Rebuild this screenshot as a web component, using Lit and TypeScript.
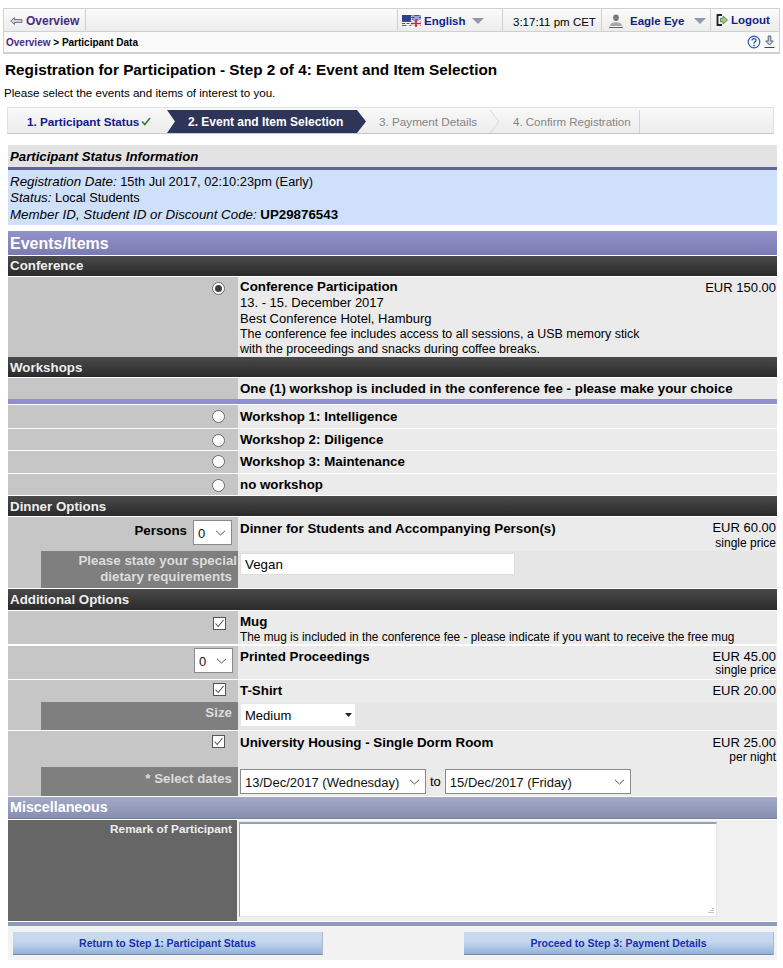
import { LitElement, css, html, svg } from "lit";
import { customElement } from "lit/decorators.js";

const chevron = html`<svg class="chev" width="11" height="6" viewBox="0 0 11 6"><path d="M1 .8 5.500 5 10 .8" fill="none" stroke="#555" stroke-width="1"/></svg>`;
const tri = html`<svg class="tri" width="12" height="6" viewBox="0 0 12 6"><path d="M0 0h12L6 6z" fill="#8d99ad"/></svg>`;

const flag = svg`<svg width="19" height="12" viewBox="0 0 19 12">
  <rect width="19" height="12" fill="#d8232f"/>
  <path d="M0 1.500h19M0 3.500h19M0 5.500h19M0 7.500h19M0 9.500h19M0 11.500h19" stroke="#f4f4f4" stroke-width="1"/>
  <rect width="9" height="6" fill="#2b3f95"/>
  <path d="M10 0 19 6M19 0 10 6" stroke="#fff" stroke-width="1.500"/>
  <rect x="10" y="0" width="9" height="6" fill="#2b3f95" opacity=".45"/>
  <path d="M9 12 19 5M9 5l10 7" stroke="#fff" stroke-width="1.800"/>
  <path d="M3 12 9 8M3 8l6 4" stroke="#fff" stroke-width="1"/>
  <path d="M14 5v7M9 8.500h10" stroke="#d8232f" stroke-width="1.500"/>
</svg>`;

@customElement("app-root")
export class AppRoot extends LitElement {
  static styles = css`
    :host {
      display: block;
      width: 783px;
      height: 968px;
      background: #fff;
      font-family: "Liberation Sans", Arial, sans-serif;
      font-size: 13px;
      color: #000;
      overflow: hidden;
    }
    .page {
      padding: 8px 3px 0 3px;
    }
    .head {
      border: 1px solid #d0d0d0;
      border-bottom-width: 2px;
      background: #fafafa;
    }
    .nav {
      display: flex;
      height: 22px;
      background: linear-gradient(#fbfbfb, #ececec);
      border-bottom: 1px solid #d0d0d0;
      font-weight: bold;
      font-size: 11.500px;
    }
    .nav > div {
      display: flex;
      align-items: center;
      border-right: 1px solid #d0d0d0;
      box-sizing: border-box;
      padding-top: 2px;
    }
    .nav .back {
      width: 82px;
      padding-left: 6px;
      gap: 3px;
      color: #4b2a85;
      font-size: 12px;
    }
    .nav .fill {
      flex: 1;
    }
    .nav .lang {
      width: 105px;
      padding-left: 4px;
      gap: 3px;
      color: #0f1f8f;
    }
    .nav .clock {
      width: 99px;
      padding-left: 10px;
      padding-top: 4px;
      font-weight: normal;
    }
    .nav .user {
      width: 109px;
      padding-left: 7px;
      gap: 7px;
      color: #0f1f8f;
    }
    .nav .logout {
      flex: none;
      width: 68px;
      padding-left: 5px;
      padding-bottom: 2px;
      gap: 3px;
      color: #0f1f8f;
      border-right: none;
    }
    .tri {
      margin-left: 3px;
    }
    .crumb {
      display: flex;
      align-items: center;
      justify-content: space-between;
      height: 20px;
      padding: 0 4px 0 2px;
      font-size: 10px;
      font-weight: bold;
    }
    .crumb .link {
      color: #4b2a85;
    }
    .crumb .tools {
      display: flex;
      gap: 3px;
    }
    h1 {
      margin: 7px 0 0 2px;
      font-size: 15.300px;
      line-height: 17px;
    }
    .intro {
      margin: 8px 0 0 1px;
      line-height: 14px;
      font-size: 11.600px;
    }
    .steps {
      display: flex;
      margin: 7px 6px 0 4px;
      height: 27px;
      box-sizing: border-box;
      padding: 2px 0;
      background: linear-gradient(#f9f9f9, #ececec);
      border: 1px solid #e2e2e2;
      border-bottom-color: #c8c8c8;
      font-size: 11.700px;
    }
    .step {
      display: flex;
      align-items: center;
      gap: 2px;
      height: 23px;
      flex: none;
      position: relative;
      box-sizing: border-box;
    }
    .step.done {
      width: 160px;
      padding-left: 19px;
      color: #13188b;
      font-weight: bold;
    }
    .step.on {
      width: 199px;
      padding-left: 21px;
      color: #fff;
      font-weight: bold;
      font-size: 12px;
      background: #2e3559;
      clip-path: polygon(0 0, 190px 0, 199px 50%, 190px 100%, 0 100%, 8px 50%);
      margin-left: -1px;
    }
    .step.pay {
      width: 134px;
      padding-left: 13px;
      color: #858585;
    }
    .step.conf {
      width: 140px;
      padding-left: 13px;
      color: #858585;
      border-right: 1px solid #d4d4d4;
      font-size: 11.500px;
    }
    .step.pay svg {
      position: absolute;
      right: 0;
      top: 0;
    }
    .panel {
      margin: 11px 3px 0 5px;
    }
    .status-head {
      height: 22px;
      line-height: 23px;
      padding-left: 2px;
      background: #e3e3e3;
      border-bottom: 3px solid #64649c;
      font-size: 13.200px;
      font-weight: bold;
      font-style: italic;
    }
    .status {
      height: 55px;
      box-sizing: border-box;
      padding: 4px 2px 0;
      background: #cfe0fb;
      line-height: 16.300px;
      font-size: 12.800px;
    }
    .status i,
    .status b {
      font-size: 13.330px;
    }
    .events {
      margin-top: 6px;
      height: 24px;
      line-height: 25px;
      padding-left: 2px;
      background: linear-gradient(#9393cb, #7a7ab4);
      color: #fff;
      font-size: 16px;
      font-weight: bold;
    }
    .misc {
      height: 22px;
      margin-bottom: 1px;
      line-height: 21px;
      padding-left: 2px;
      background: linear-gradient(#a3a9c6, #878fb0);
      border-bottom: 1px solid #76809c;
      box-sizing: border-box;
      color: #fff;
      font-size: 14.300px;
      font-weight: bold;
    }
    .sec {
      box-sizing: border-box;
      height: 21px;
      line-height: 21px;
      padding-left: 2px;
      background: linear-gradient(#4a4a4a, #2a2a2a);
      color: #eee;
      font-size: 13.330px;
      font-weight: bold;
      border-bottom: 1px solid #fff;
    }
    .sec.first {
      margin-top: 1px;
      line-height: 20px;
    }
    .sec.tall {
      height: 22px;
    }
    .row {
      display: grid;
      grid-template-columns: 230px 1fr;
      border-bottom: 1px solid #fff;
      box-sizing: border-box;
    }
    .row.bare {
      border-bottom: none;
    }
    .row .l {
      background: #c6c6c6;
      display: flex;
      justify-content: flex-end;
      padding-right: 8px;
      box-sizing: border-box;
    }
    .row .c {
      background: #ebebeb;
      display: flex;
      justify-content: space-between;
      padding: 0 1px 0 2px;
      font-weight: bold;
      font-size: 13.330px;
      overflow: hidden;
    }
    .row .c b {
      display: block;
      line-height: 16px;
      padding-top: 3px;
    }
    .row .c b.hi {
      padding-top: 2px;
    }
    .row .c b.low {
      padding-top: 4px;
    }
    .desc {
      font-weight: normal;
      line-height: 16px;
      font-size: 13px;
    }
    .small {
      font-weight: normal;
      font-size: 12.450px;
      line-height: 15px;
      white-space: nowrap;
    }
    .small.mug {
      font-size: 11.870px;
    }
    .price {
      font-weight: normal;
      text-align: right;
      font-size: 13px;
      line-height: 16px;
      padding: 3px 0 0;
      white-space: nowrap;
    }
    .price span {
      display: block;
      font-size: 12px;
      line-height: 14px;
    }
    .price.print span {
      margin-top: -2px;
    }
    .price.house {
      padding-top: 4px;
    }
    .price.house span {
      margin-top: -1px;
    }
    .radio {
      width: 11px;
      height: 11px;
      margin: 5px 5px 0 0;
      border: 1px solid #6b6b6b;
      border-radius: 50%;
      background: #fff;
      position: relative;
      flex: none;
    }
    .radio.up {
      margin-top: 4px;
    }
    .radio.on::after {
      content: "";
      position: absolute;
      inset: 2px;
      border-radius: 50%;
      background: #3c3c3c;
    }
    .check {
      width: 11px;
      height: 11px;
      margin: 6px 4px 0 0;
      border: 1px solid #555;
      background: #fff;
      flex: none;
      display: flex;
    }
    .check.t3 {
      margin-top: 3px;
    }
    .check.t4 {
      margin: 4px 5px 0 0;
    }
    .sel {
      position: relative;
      box-sizing: border-box;
      height: 25px;
      background: #fff;
      border: 1px solid #8a8a8a;
      display: flex;
      align-items: center;
      padding: 1px 0 0 4px;
      font-size: 13px;
      font-weight: normal;
      color: #111;
    }
    .sel .chev {
      position: absolute;
      right: 5px;
      top: 9px;
    }
    .qty {
      padding: 3px 0 0;
      margin-right: -2px;
    }
    .qty.tight {
      padding: 2px 0 0;
      margin-right: -3px;
    }
    .persons {
      padding-top: 6px;
      padding-right: 6px;
      font-weight: bold;
      font-size: 13.330px;
    }
    .split .l {
      padding: 0;
      display: grid;
      grid-template-rows: auto 1fr;
      grid-template-columns: 33px 1fr;
    }
    .split .l .top {
      grid-column: 1 / 3;
      display: flex;
      justify-content: flex-end;
      align-items: flex-start;
      padding-right: 8px;
    }
    .split .l .tag {
      grid-column: 2;
      background: #7f7f7f;
      color: #dcdcdc;
      font-weight: bold;
      font-size: 13.330px;
      text-align: right;
      padding: 3px 6px 0 0;
      line-height: 16px;
      white-space: nowrap;
    }
    .split .l .tag.lines {
      padding-top: 2px;
    }
    .split .l .tag.dates {
      padding-top: 4px;
    }
    .tag .over {
      margin-right: -5px;
    }
    .split .c {
      display: block;
      padding: 0;
    }
    .split .c .top {
      display: flex;
      justify-content: space-between;
      padding: 0 1px 0 2px;
    }
    .split .c .bot {
      background: #e6e6e6;
      padding: 2px 2px 0;
      display: flex;
      align-items: flex-start;
      gap: 4px;
      font-weight: normal;
      font-size: 13px;
    }
    .split .c .bot.plain {
      background: #ebebeb;
    }
    .bot .to {
      padding-top: 5px;
    }
    .text {
      box-sizing: border-box;
      width: 275px;
      height: 22px;
      background: #fff;
      border: 1px solid #dcdcdc;
      padding: 3px 4px;
      font-weight: normal;
      font-size: 13.330px;
      line-height: 15px;
    }
    .drop {
      box-sizing: border-box;
      width: 114px;
      height: 22px;
      margin-left: 1px;
      background: #fff;
      display: flex;
      justify-content: space-between;
      align-items: center;
      padding: 0 3px 0 4px;
      font-size: 13px;
    }
    .strip {
      height: 5px;
      background: #8f8fcc;
      border-bottom: 1px solid #fff;
    }
    .remark {
      display: grid;
      grid-template-columns: 229px 1fr;
      height: 102px;
      box-sizing: border-box;
      border-bottom: 1px solid #fff;
    }
    .remark .tag {
      background: #666;
      color: #eee;
      text-align: right;
      font-weight: bold;
      font-size: 11.800px;
      line-height: 14px;
      padding: 2px 5px 0 0;
    }
    .remark .box {
      background: #f0f0f0;
      padding: 2px 0 0 2px;
    }
    .area {
      box-sizing: border-box;
      width: 478px;
      height: 95px;
      background: #fff;
      border: 1px solid #e2e6ea;
      border-top: 2px solid #8ca5b5;
      border-left: 1px solid #8ca5b5;
      position: relative;
    }
    .area svg {
      position: absolute;
      right: 1px;
      bottom: 1px;
    }
    .blue-strip {
      height: 4px;
      background: #8f99ba;
    }
    .foot {
      display: flex;
      justify-content: space-between;
      height: 34px;
      padding: 6px 3px 0 5px;
      box-sizing: border-box;
      background: #f2f2f2;
    }
    .btn {
      box-sizing: border-box;
      width: 310px;
      height: 23px;
      display: flex;
      align-items: center;
      justify-content: center;
      background: linear-gradient(#c9daf0, #c5d7ee 45%, #92b1d8);
      border-bottom: 1px solid #7c8ba0;
      border-right: 1px solid #b0b8c4;
      color: #1330b3;
      font-size: 10.500px;
      font-weight: bold;
    }
  `;

  private selectBox(text: string, width: number) {
    return html`<div class="sel" style="width:${width}px">${text}${chevron}</div>`;
  }

  private radioRow(label: string, height: number, up = false, low = false) {
    return html`<div class="row" style="height:${height}px">
      <div class="l"><div class="radio ${up ? "up" : ""}"></div></div>
      <div class="c"><b class=${low ? "low" : ""}>${label}</b></div>
    </div>`;
  }

  private tick() {
    return html`<svg width="11" height="11" viewBox="0 0 11 11"><path d="M1.500 5.500 4.200 8.500 9.500 2" fill="none" stroke="#555" stroke-width="1.100"/></svg>`;
  }

  render() {
    return html`<div class="page">
      <div class="head">
        <div class="nav">
          <div class="back">
            <svg width="13" height="9" viewBox="0 0 13 9"><path d="M4.500 .5.800 4 4.500 7.500V5.400H12V2.600H4.500z" fill="#d6dae2" stroke="#6a7080"/></svg>
            Overview
          </div>
          <div class="fill"></div>
          <div class="lang">${flag} English ${tri}</div>
          <div class="clock">3:17:11 pm CET</div>
          <div class="user">
            <svg width="14" height="14" viewBox="0 0 14 14"><ellipse cx="7" cy="3.800" rx="2.800" ry="3.300" fill="#777"/><path d="M1 12c.3-3 3-3.800 6-3.800s5.700.8 6 3.800z" fill="#a8a8a8"/><path d="M0 13.500h14" stroke="#666"/></svg>
            Eagle Eye ${tri}
          </div>
          <div class="logout">
            <svg width="12" height="12" viewBox="0 0 12 12"><path d="M6 1H1.500v10H6" fill="none" stroke="#222" stroke-width="1.800"/><path d="M4.500 4.200h2.600V2L11.500 6 7.100 10V7.800H4.500z" fill="#9ccf7c" stroke="#3f6d2d" stroke-width=".7"/></svg>
            Logout
          </div>
        </div>
        <div class="crumb">
          <span><span class="link">Overview</span> &gt; Participant Data</span>
          <span class="tools">
            <svg width="14" height="14" viewBox="0 0 14 14"><circle cx="7" cy="7" r="5.800" fill="none" stroke="#2d5a9e" stroke-width="1.200"/><path d="M5 5.400C5 3 9 3 9 5.400 9 7 7 6.800 7 8.400" fill="none" stroke="#2d5a9e" stroke-width="1.300"/><circle cx="7" cy="10.300" r=".9" fill="#2d5a9e"/></svg>
            <svg width="11" height="14" viewBox="0 0 11 14"><path d="M4.200 1h2.600v5h2.500L5.500 10 1.700 6h2.500z" fill="#c9d2dc" stroke="#4a5560" stroke-width=".9"/><path d="M.5 12.500h10" stroke="#444"/></svg>
          </span>
        </div>
      </div>

      <h1>Registration for Participation - Step 2 of 4: Event and Item Selection</h1>
      <p class="intro">Please select the events and items of interest to you.</p>

      <div class="steps">
        <div class="step done">
          1. Participant Status
          <svg width="10" height="9" viewBox="0 0 10 9"><path d="M1 4.500 3.800 7.500 9 1" fill="none" stroke="#2a7a2a" stroke-width="1.500"/></svg>
        </div>
        <div class="step on">2. Event and Item Selection</div>
        <div class="step pay">
          3. Payment Details
          <svg width="11" height="23" viewBox="0 0 11 23"><path d="M1 0 10 11.500 1 23" fill="none" stroke="#d8d8d8"/></svg>
        </div>
        <div class="step conf">4. Confirm Registration</div>
      </div>

      <div class="panel">
        <div class="status-head">Participant Status Information</div>
        <div class="status">
          <i>Registration Date:</i> 15th Jul 2017, 02:10:23pm (Early)<br />
          <i>Status:</i> Local Students<br />
          <i>Member ID, Student ID or Discount Code:</i> <b>UP29876543</b>
        </div>

        <div class="events">Events/Items</div>

        <div class="sec first">Conference</div>
        <div class="row bare" style="height:80px">
          <div class="l"><div class="radio on"></div></div>
          <div class="c">
            <div>
              <b class="hi">Conference Participation</b>
              <div class="desc">13. - 15. December 2017</div>
              <div class="desc">Best Conference Hotel, Hamburg</div>
              <div class="small">The conference fee includes access to all sessions, a USB memory stick</div>
              <div class="small">with the proceedings and snacks during coffee breaks.</div>
            </div>
            <div class="price">EUR 150.00</div>
          </div>
        </div>

        <div class="sec">Workshops</div>
        <div class="row bare" style="height:21px">
          <div class="l"></div>
          <div class="c"><b>One (1) workshop is included in the conference fee - please make your choice</b></div>
        </div>
        <div class="strip"></div>
        ${this.radioRow("Workshop 1: Intelligence", 24, false, true)}
        ${this.radioRow("Workshop 2: Diligence", 22)}
        ${this.radioRow("Workshop 3: Maintenance", 23, true)}
        ${this.radioRow("no workshop", 22)}

        <div class="sec">Dinner Options</div>
        <div class="row split" style="height:72px">
          <div class="l">
            <div class="top" style="height:34px">
              <span class="persons">Persons</span>
              <div class="qty">${this.selectBox("0", 39)}</div>
            </div>
            <div class="tag lines"><div class="over">Please state your special</div>dietary requirements</div>
          </div>
          <div class="c">
            <div class="top" style="height:34px">
              <b class="low">Dinner for Students and Accompanying Person(s)</b>
              <div class="price">EUR 60.00<span>single price</span></div>
            </div>
            <div class="bot" style="height:37px"><div class="text">Vegan</div></div>
          </div>
        </div>

        <div class="sec tall">Additional Options</div>
        <div class="row" style="height:35px;border-bottom-width:2px">
          <div class="l"><div class="check">${this.tick()}</div></div>
          <div class="c">
            <div>
              <b>Mug</b>
              <div class="small mug">The mug is included in the conference fee - please indicate if you want to receive the free mug</div>
            </div>
          </div>
        </div>
        <div class="row" style="height:34px">
          <div class="l"><div class="qty tight">${this.selectBox("0", 39)}</div></div>
          <div class="c">
            <b>Printed Proceedings</b>
            <div class="price print">EUR 45.00<span>single price</span></div>
          </div>
        </div>
        <div class="row split" style="height:51px">
          <div class="l">
            <div class="top" style="height:22px"><div class="check t3">${this.tick()}</div></div>
            <div class="tag">Size</div>
          </div>
          <div class="c">
            <div class="top" style="height:22px"><b>T-Shirt</b><div class="price">EUR 20.00</div></div>
            <div class="bot" style="height:28px">
              <div class="drop">
                Medium
                <svg width="7" height="4" viewBox="0 0 7 4"><path d="M0 0h7L3.500 4z" fill="#222"/></svg>
              </div>
            </div>
          </div>
        </div>
        <div class="row split" style="height:66px">
          <div class="l">
            <div class="top" style="height:36px"><div class="check t4">${this.tick()}</div></div>
            <div class="tag dates">* Select dates</div>
          </div>
          <div class="c">
            <div class="top" style="height:36px">
              <b class="low">University Housing - Single Dorm Room</b>
              <div class="price house">EUR 25.00<span>per night</span></div>
            </div>
            <div class="bot plain" style="height:29px">
              ${this.selectBox("13/Dec/2017 (Wednesday)", 186)}
              <span class="to">to</span>
              ${this.selectBox("15/Dec/2017 (Friday)", 186)}
            </div>
          </div>
        </div>

        <div class="misc">Miscellaneous</div>
        <div class="remark">
          <div class="tag">Remark of Participant</div>
          <div class="box">
            <div class="area">
              <svg width="8" height="8" viewBox="0 0 8 8"><path d="M6 1v1M4 3v1M6 3v1M2 5v1M4 5v1M6 5v1" stroke="#888"/></svg>
            </div>
          </div>
        </div>
        <div class="blue-strip"></div>
        <div class="foot">
          <div class="btn">Return to Step 1: Participant Status</div>
          <div class="btn">Proceed to Step 3: Payment Details</div>
        </div>
      </div>
    </div>`;
  }
}
